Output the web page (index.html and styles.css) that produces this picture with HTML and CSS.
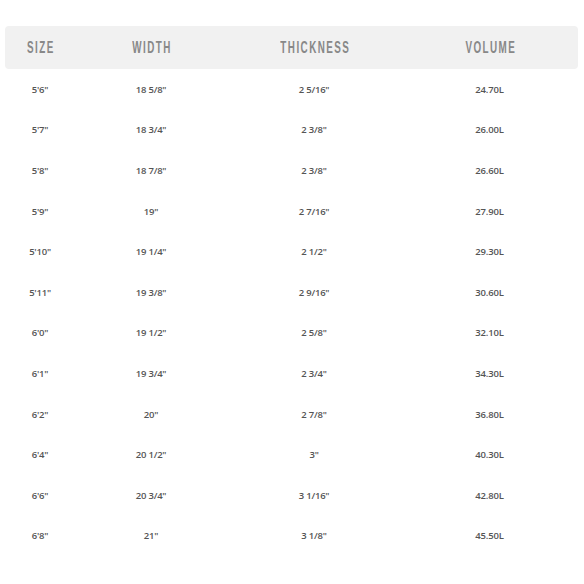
FILE: index.html
```html
<!DOCTYPE html>
<html>
<head>
<meta charset="utf-8">
<link rel="stylesheet" href="styles.css">
</head>
<body>
<div class="wrap">
  <div class="table">
    <div class="row head">
      <div class="cell"><span class="hl">SIZE</span></div>
      <div class="cell"><span class="hl">WIDTH</span></div>
      <div class="cell"><span class="hl">THICKNESS</span></div>
      <div class="cell"><span class="hl">VOLUME</span></div>
    </div>
    <div class="row"><div class="cell">5'6"</div><div class="cell">18 5/8"</div><div class="cell">2 5/16"</div><div class="cell">24.70L</div></div>
    <div class="row"><div class="cell">5'7"</div><div class="cell">18 3/4"</div><div class="cell">2 3/8"</div><div class="cell">26.00L</div></div>
    <div class="row"><div class="cell">5'8"</div><div class="cell">18 7/8"</div><div class="cell">2 3/8"</div><div class="cell">26.60L</div></div>
    <div class="row"><div class="cell">5'9"</div><div class="cell">19"</div><div class="cell">2 7/16"</div><div class="cell">27.90L</div></div>
    <div class="row"><div class="cell">5'10"</div><div class="cell">19 1/4"</div><div class="cell">2 1/2"</div><div class="cell">29.30L</div></div>
    <div class="row"><div class="cell">5'11"</div><div class="cell">19 3/8"</div><div class="cell">2 9/16"</div><div class="cell">30.60L</div></div>
    <div class="row"><div class="cell">6'0"</div><div class="cell">19 1/2"</div><div class="cell">2 5/8"</div><div class="cell">32.10L</div></div>
    <div class="row"><div class="cell">6'1"</div><div class="cell">19 3/4"</div><div class="cell">2 3/4"</div><div class="cell">34.30L</div></div>
    <div class="row"><div class="cell">6'2"</div><div class="cell">20"</div><div class="cell">2 7/8"</div><div class="cell">36.80L</div></div>
    <div class="row"><div class="cell">6'4"</div><div class="cell">20 1/2"</div><div class="cell">3"</div><div class="cell">40.30L</div></div>
    <div class="row"><div class="cell">6'6"</div><div class="cell">20 3/4"</div><div class="cell">3 1/16"</div><div class="cell">42.80L</div></div>
    <div class="row"><div class="cell">6'8"</div><div class="cell">21"</div><div class="cell">3 1/8"</div><div class="cell">45.50L</div></div>
  </div>
</div>
</body>
</html>
```
FILE: styles.css
```css
html, body {
  margin: 0;
  padding: 0;
  background: #ffffff;
}
.wrap {
  padding: 26px 6px 0 5px;
}
.table {
  display: flex;
  flex-direction: column;
}
.row {
  display: grid;
  grid-template-columns: 70px 152px 174px 1fr;
  height: 40.6px;
  align-items: center;
  font-family: "Open Sans", "Liberation Sans", sans-serif;
  font-weight: 600;
  font-size: 9.5px;
  letter-spacing: -0.2px;
  color: #555555;
}
.row.head {
  height: 43px;
  background: #f1f1f1;
  border-radius: 4px;
}
.cell {
  text-align: center;
}
.hl {
  display: inline-block;
  font-family: "Liberation Sans", sans-serif;
  font-size: 17px;
  font-weight: 700;
  letter-spacing: 2.5px;
  margin-right: -2.5px;
  color: #888888;
  transform: scaleX(0.58);
}
```
